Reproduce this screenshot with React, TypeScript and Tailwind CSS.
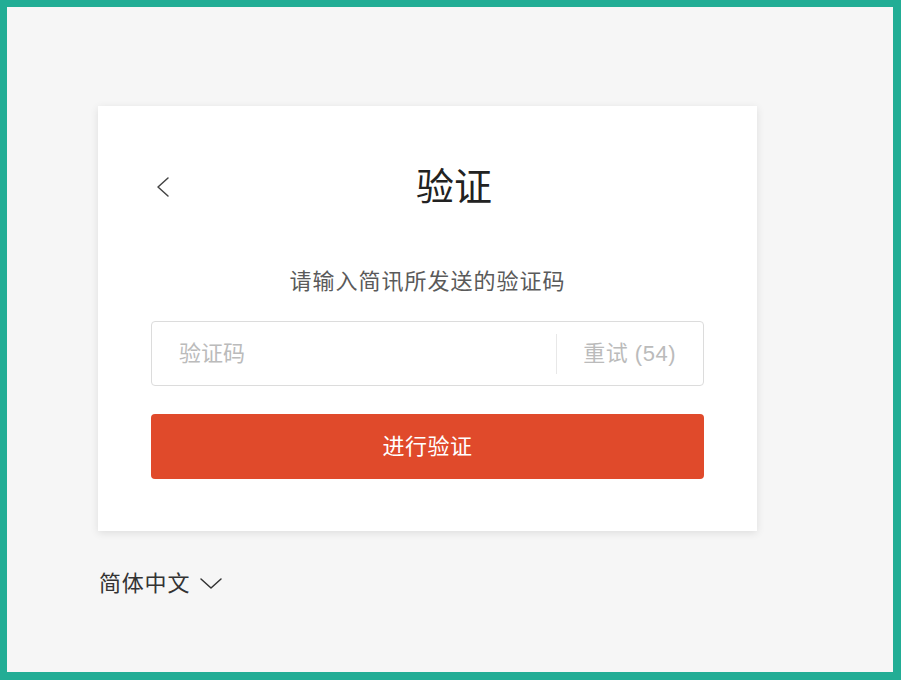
import React from 'react';

const BackIcon = () => (
  <svg width="16" height="24" viewBox="0 0 16 24" fill="none">
    <path d="M13 3 L3 12 L13 21" stroke="#444" strokeWidth="1.5" strokeLinecap="round" strokeLinejoin="round" />
  </svg>
);

const ChevronDown = () => (
  <svg width="24" height="14" viewBox="0 0 24 14" fill="none">
    <path d="M2 3 L12 12 L22 3" stroke="#333" strokeWidth="1.5" strokeLinecap="round" strokeLinejoin="round" />
  </svg>
);

export default function App() {
  return (
    <div className="w-[901px] h-[680px] border-[7px] border-r-[8px] border-b-[8px] border-[#22ad95] bg-[#f6f6f6] font-['Liberation_Sans','Noto_Sans_CJK_SC',sans-serif]">
      <div className="pl-[91px] pt-[99px]">
        {/* Card */}
        <div className="w-[659px] bg-white px-[53px] pt-[56px] pb-[52px] shadow-[0_2px_8px_rgba(0,0,0,0.10)]">
          <div className="flex items-center h-[50px]">
            <div className="w-[53px] flex items-center pl-[4px]">
              <BackIcon />
            </div>
            <h1 className="flex-1 text-center text-[38px] leading-[50px] text-[#222] font-normal">验证</h1>
          </div>

          <p className="mt-[54px] text-center text-[22px] leading-[32px] tracking-[1px] text-[#5a5a5a]">
            请输入简讯所发送的验证码
          </p>

          <div className="mt-[23px] h-[65px] flex items-center border border-[#dcdcdc] rounded-[4px]">
            <input
              type="text"
              placeholder="验证码"
              className="flex-1 min-w-0 h-full pl-[27px] bg-transparent text-[22px] text-[#333] placeholder:text-[#bbb] outline-none"
            />
            <div className="w-px h-[40px] bg-[#e8e8e8]" />
            <span className="pl-[26px] pr-[27px] text-[22px] tracking-[0.5px] text-[#bbb] whitespace-nowrap">重试 (54)</span>
          </div>

          <button className="mt-[28px] w-full h-[65px] rounded-[4px] bg-[#e04a2b] text-white text-[22px] tracking-[0.5px]">
            进行验证
          </button>
        </div>

        {/* Language */}
        <div className="mt-[36px] ml-[1px] flex items-center gap-[9px] h-[32px] text-[22px] tracking-[0.8px] text-[#333]">
          <span>简体中文</span>
          <ChevronDown />
        </div>
      </div>
    </div>
  );
}
